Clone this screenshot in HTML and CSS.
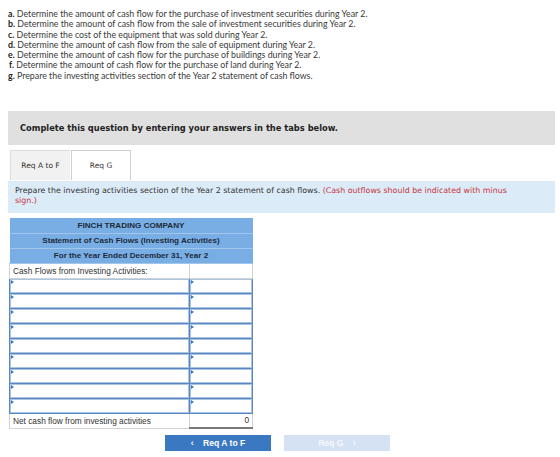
FILE: index.html
```html
<!DOCTYPE html>
<html lang="en">
<head>
    <meta charset="UTF-8">
    <title>Cash Flows</title>
    <link rel="stylesheet" href="styles.css">
</head>
<body>
    <div class="page">
        <ol class="tasks">
            <li><b>a.</b> Determine the amount of cash flow for the purchase of investment securities during Year 2.</li>
            <li><b>b.</b> Determine the amount of cash flow from the sale of investment securities during Year 2.</li>
            <li><b>c.</b> Determine the cost of the equipment that was sold during Year 2.</li>
            <li><b>d.</b> Determine the amount of cash flow from the sale of equipment during Year 2.</li>
            <li><b>e.</b> Determine the amount of cash flow for the purchase of buildings during Year 2.</li>
            <li class="indent"><b>f.</b> Determine the amount of cash flow for the purchase of land during Year 2.</li>
            <li><b>g.</b> Prepare the investing activities section of the Year 2 statement of cash flows.</li>
        </ol>

        <div class="complete">Complete this question by entering your answers in the tabs below.</div>

        <div class="tabs">
            <div class="tab">Req A to F</div>
            <div class="tab active">Req G</div>
        </div>

        <div class="info">
            Prepare the investing activities section of the Year 2 statement of cash flows. <span class="note">(Cash outflows should be indicated with minus sign.)</span>
        </div>

        <table class="sheet">
            <colgroup><col class="c1"><col class="c2"></colgroup>
            <tr class="head"><th colspan="2">FINCH TRADING COMPANY</th></tr>
            <tr class="head"><th colspan="2">Statement of Cash Flows (Investing Activities)</th></tr>
            <tr class="head"><th colspan="2">For the Year Ended December 31, Year 2</th></tr>
            <tr class="label"><td>Cash Flows from Investing Activities:</td><td></td></tr>
            <tr class="entry"><td></td><td></td></tr>
            <tr class="entry"><td></td><td></td></tr>
            <tr class="entry"><td></td><td></td></tr>
            <tr class="entry"><td></td><td></td></tr>
            <tr class="entry"><td></td><td></td></tr>
            <tr class="entry"><td></td><td></td></tr>
            <tr class="entry"><td></td><td></td></tr>
            <tr class="entry"><td></td><td></td></tr>
            <tr class="entry"><td></td><td></td></tr>
            <tr class="total"><td>Net cash flow from investing activities</td><td class="amount">0</td></tr>
        </table>

        <div class="nav">
            <div class="btn prev">&lsaquo;&nbsp;&nbsp;&nbsp;&nbsp;Req A to F</div>
            <div class="btn next">Req G&nbsp;&nbsp;&nbsp;&nbsp;&rsaquo;</div>
        </div>
    </div>
</body>
</html>
```

FILE: styles.css
```css
body {
    margin: 0;
    background: #ffffff;
    font-family: 'Lato', sans-serif;
    color: #333;
}

.page {
    width: 547px;
    margin-left: 8px;
    padding-top: 9px;
}

.tasks {
    list-style: none;
    margin: 0;
    padding: 0;
    font-size: 8.8px;
    line-height: 10.3px;
    color: #3a3a3a;
}

.tasks b {
    color: #222;
}

.tasks .indent {
    padding-left: 1px;
}

.complete {
    margin-top: 30px;
    height: 34px;
    background: #e0e0e0;
    font-family: 'DejaVu Sans', sans-serif;
    font-weight: bold;
    font-size: 8.3px;
    color: #222;
    display: flex;
    align-items: center;
    padding-left: 12px;
}

.tabs {
    display: flex;
    margin-top: 5px;
    padding-left: 2px;
    height: 30px;
}

.tab {
    width: 60px;
    display: flex;
    align-items: center;
    justify-content: center;
    font-family: 'DejaVu Sans', sans-serif;
    font-size: 7.5px;
    color: #333;
    background: #f1f1f1;
    box-sizing: border-box;
    border-top: 1px solid #dcdcdc;
    border-left: 1px solid #dcdcdc;
}

.tab.active {
    background: #ffffff;
    border: 1px solid #cfcfcf;
    border-bottom: none;
    margin-left: 1px;
}

.info {
    margin-top: 1px;
    height: 32px;
    box-sizing: border-box;
    background: #dcebf8;
    padding: 5px 36px 0 7px;
    font-family: 'DejaVu Sans', sans-serif;
    font-size: 7.9px;
    line-height: 10px;
    color: #333;
}

.info .note {
    color: #c8363d;
}

.sheet {
    margin: 5px 0 0 1px;
    width: 244px;
    table-layout: fixed;
    border-collapse: collapse;
    font-family: 'Liberation Sans', sans-serif;
    font-size: 8.3px;
}

.sheet .c1 {
    width: 180px;
}

.sheet tr {
    height: 15px;
}

.head th {
    background: #79aee4;
    color: #1d2a3a;
    font-weight: bold;
    font-size: 8.1px;
    padding: 0;
    height: 14px;
    border-bottom: 1px solid #a3c6ec;
}

.label td, .total td {
    border: 1px solid #d2d2d2;
    padding: 0 3px;
    color: #333;
    white-space: nowrap;
}

.entry td {
    position: relative;
    border: 1px solid #5b86c0;
    box-shadow: inset 0 0 0 1px #aac4e4;
    padding: 0;
}

.entry td::before {
    content: "";
    position: absolute;
    left: 1px;
    top: 1px;
    border-top: 2px solid transparent;
    border-bottom: 2px solid transparent;
    border-left: 3px solid #3a78c8;
}

.total .amount {
    text-align: right;
    border-bottom: 2px solid #7a7a7a;
}

.nav {
    display: flex;
    gap: 13px;
    margin: 6px 0 0 157px;
}

.btn {
    width: 106px;
    height: 16px;
    display: flex;
    align-items: center;
    justify-content: center;
    font-family: 'Liberation Sans', sans-serif;
    font-weight: bold;
    font-size: 8.6px;
    color: #ffffff;
}

.prev {
    background: #3b78c2;
}

.next {
    background: #d5e2f3;
    color: #f4f8fd;
}
```
